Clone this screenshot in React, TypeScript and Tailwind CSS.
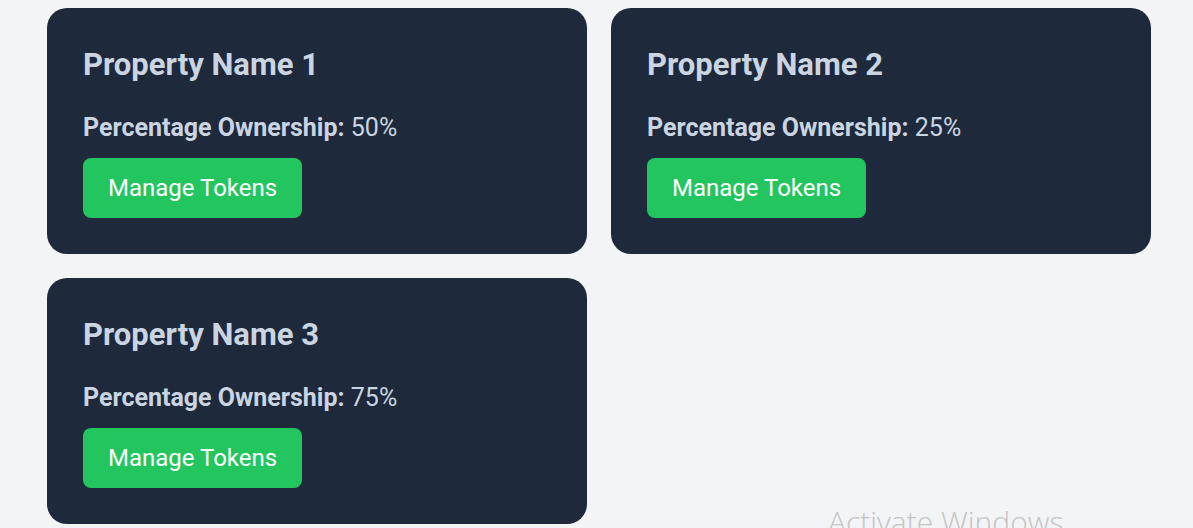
import React from "react";

type Property = {
  id: number;
  name: string;
  ownership: number;
};

const properties: Property[] = [
  { id: 1, name: "Property Name 1", ownership: 50 },
  { id: 2, name: "Property Name 2", ownership: 25 },
  { id: 3, name: "Property Name 3", ownership: 75 },
];

const PropertyCard = ({ property }: { property: Property }) => {
  return (
    <div className="bg-[#1e293b] rounded-[20px] p-9 text-[#cbd5e1]">
      <h2 className="text-[31px] leading-[40px] font-bold mt-px">{property.name}</h2>
      <p className="mt-[27px] text-[25px] leading-8">
        <span className="font-bold">Percentage Ownership:</span>{" "}
        {property.ownership}%
      </p>
      <button className="mt-[14px] bg-[#22c55e] text-white text-2xl leading-8 px-[25px] py-[14px] rounded-lg">
        Manage Tokens
      </button>
    </div>
  );
};

export default function App() {
  return (
    <div
      className="relative min-h-[528px] bg-[#f3f4f6] overflow-hidden"
      style={{ fontFamily: "Roboto, 'Liberation Sans', sans-serif" }}
    >
      <div className="grid grid-cols-[540px_540px] gap-6 pl-[47px] pt-2">
        {properties.map((p) => (
          <PropertyCard key={p.id} property={p} />
        ))}
      </div>
      <div
        className="absolute left-[828px] top-[507px] text-[30px] leading-none font-light text-[#c4c4c4] whitespace-nowrap"
        style={{ fontFamily: "'Open Sans', sans-serif" }}
      >
        Activate Windows
      </div>
    </div>
  );
}
